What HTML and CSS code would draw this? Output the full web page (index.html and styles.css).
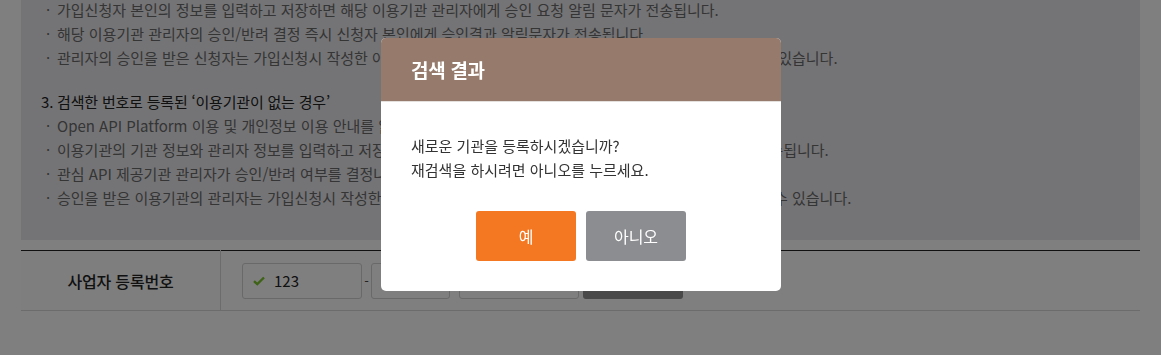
FILE: index.html
```html
<!DOCTYPE html>
<html lang="ko">

<head>
    <meta charset="UTF-8">
    <meta name="viewport" content="width=device-width, initial-scale=1.0">
    <title>이용기관 등록</title>
    <link rel="stylesheet" href="styles.css">
</head>

<body>
    <div class="container">
        <div class="guide-box">
            <ul class="guide-list">
                <li><span class="dot">·</span>가입신청자 본인의 정보를 입력하고 저장하면 해당 이용기관 관리자에게 승인 요청 알림 문자가 전송됩니다.</li>
                <li><span class="dot">·</span>해당 이용기관 관리자의 승인/반려 결정 즉시 신청자 본인에게 승인결과 알림문자가 전송됩니다.</li>
                <li><span class="dot">·</span>관리자의 승인을 받은 신청자는 가입신청시 작성한 아이디와 비밀번호로 로그인하여 해당 서비스를 바로 이용하실 수 있습니다.</li>
            </ul>

            <p class="guide-title">3. 검색한 번호로 등록된 ‘이용기관이 없는 경우’</p>
            <ul class="guide-list">
                <li><span class="dot">·</span>Open API Platform 이용 및 개인정보 이용 안내를 읽고 동의합니다.</li>
                <li><span class="dot">·</span>이용기관의 기관 정보와 관리자 정보를 입력하고 저장하시면 관심 API 제공기관 관리자에게 승인요청 알림문자가 전송됩니다.</li>
                <li><span class="dot">·</span>관심 API 제공기관 관리자가 승인/반려 여부를 결정나면 결과가 전송됩니다.</li>
                <li><span class="dot">·</span>승인을 받은 이용기관의 관리자는 가입신청시 작성한 아이디와 비밀번호로 로그인하여 해당 서비스를 바로 이용하실 수 있습니다.</li>
            </ul>
        </div>

        <table class="form-table">
            <tr>
                <th>사업자 등록번호</th>
                <td>
                    <div class="biz-number">
                        <div class="input-box wide">
                            <svg class="check" width="12" height="10" viewBox="0 0 12 10">
                                <path d="M1 5.2 L4.3 8.2 L11 1.5" fill="none" stroke="#7cc62e" stroke-width="2.4" />
                            </svg>
                            <span>123</span>
                        </div>
                        <span class="dash">-</span>
                        <div class="input-box mid"></div>
                        <span class="dash">-</span>
                        <div class="input-box wide"></div>
                        <button class="search-button">검색</button>
                    </div>
                </td>
            </tr>
        </table>
    </div>

    <div class="dim"></div>

    <div class="modal">
        <div class="modal-head">검색 결과</div>
        <div class="modal-body">
            <p>새로운 기관을 등록하시겠습니까?<br>재검색을 하시려면 아니오를 누르세요.</p>
            <div class="modal-buttons">
                <button class="btn btn-yes">예</button>
                <button class="btn btn-no">아니오</button>
            </div>
        </div>
    </div>
</body>

</html>
```

FILE: styles.css
```css
body {
    margin: 0;
    padding: 0;
    background-color: white;
    font-family: "Noto Sans CJK KR", "Noto Sans", sans-serif;
    color: #222;
    overflow: hidden;
}

.container {
    margin-left: 21px;
    width: 1119px;
}

.guide-box {
    background-color: #e8e9ec;
    margin-top: -2px;
    padding: 0 0 30px 20px;
}

.guide-list {
    list-style: none;
    margin: 0;
    padding: 0;
}

.guide-list li {
    display: flex;
    font-size: 15px;
    line-height: 24px;
    color: #6a6a6a;
    letter-spacing: 0;
}

.dot {
    box-sizing: border-box;
    width: 16px;
    padding-left: 5px;
    flex-shrink: 0;
}

.guide-title {
    margin: 20px 0 0 0;
    font-size: 15px;
    line-height: 24px;
    color: #222;
    letter-spacing: -0.2px;
}

.form-table {
    margin-top: 10px;
    width: 100%;
    border-collapse: collapse;
    border-top: 1px solid #222;
    border-bottom: 1px solid #d8d8d8;
}

.form-table th {
    width: 199px;
    height: 59px;
    padding: 0;
    font-size: 16px;
    font-weight: 500;
    color: #222;
    letter-spacing: -0.2px;
    border-right: 1px solid #d8d8d8;
    background-color: #fcfcfc;
}

.form-table td {
    padding: 0 0 0 21px;
    background-color: #fefefe;
}

.biz-number {
    display: flex;
    align-items: center;
}

.input-box {
    box-sizing: border-box;
    height: 36px;
    border: 1px solid #d2d2d2;
    border-radius: 3px;
    background-color: white;
    display: flex;
    align-items: center;
    font-size: 15px;
    color: #222;
}

.input-box.wide {
    width: 120px;
}

.input-box.mid {
    width: 79px;
}

.check {
    margin: 0 9px 0 10px;
}

.dash {
    width: 9px;
    text-align: center;
    font-size: 13px;
    color: #444;
}

.search-button {
    margin-left: 4px;
    width: 100px;
    height: 36px;
    border: none;
    border-radius: 3px;
    background-color: #929292;
    color: white;
    font-family: inherit;
    font-size: 15px;
}

.dim {
    position: fixed;
    top: 0;
    left: 0;
    right: 0;
    bottom: 0;
    background-color: rgba(0, 0, 0, 0.5);
}

.modal {
    position: fixed;
    top: 38px;
    left: 381px;
    width: 400px;
    border-radius: 5px;
    overflow: hidden;
    background-color: white;
}

.modal-head {
    height: 63px;
    line-height: 63px;
    padding-left: 30px;
    background-color: #967b6d;
    color: white;
    font-size: 19px;
    font-weight: bold;
    letter-spacing: -0.3px;
    border-bottom: 1px solid #e4e0dd;
}

.modal-body {
    padding: 32px 30px 30px 30px;
}

.modal-body p {
    margin: 0;
    font-size: 15px;
    line-height: 24px;
    color: #333;
    letter-spacing: 0;
}

.modal-buttons {
    margin-top: 29px;
    display: flex;
    justify-content: center;
    gap: 10px;
}

.btn {
    width: 100px;
    height: 50px;
    border: none;
    border-radius: 3px;
    color: white;
    font-family: inherit;
    font-size: 16px;
    cursor: pointer;
}

.btn-yes {
    background-color: #f47721;
}

.btn-no {
    background-color: #8c8d91;
}
```
